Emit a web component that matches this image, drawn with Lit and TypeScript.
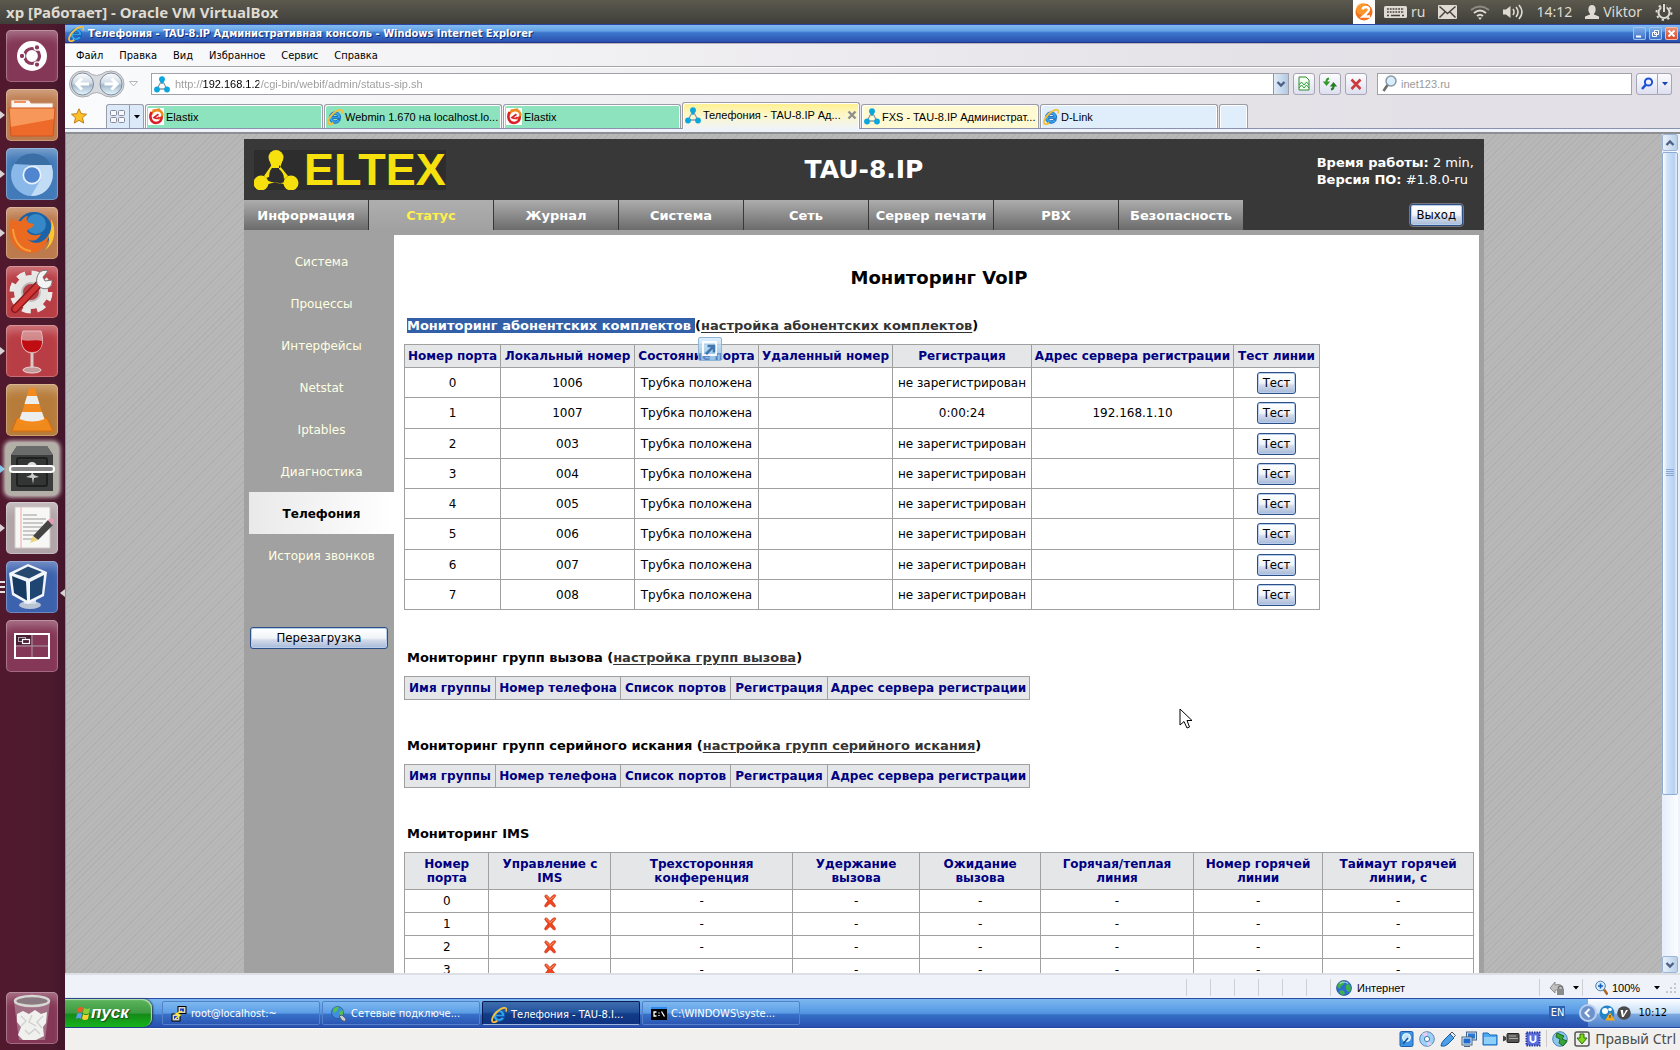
import { LitElement, html, svg, css, nothing, TemplateResult } from "lit";
import { customElement } from "lit/decorators.js";
import { classMap } from "lit/directives/class-map.js";
import { styleMap } from "lit/directives/style-map.js";

type Icon = TemplateResult;

const draw = (w: number, h: number, body: unknown, box = `0 0 ${w} ${h}`): Icon =>
  html`<svg width=${w} height=${h} viewBox=${box} aria-hidden="true">${body}</svg>`;

/* ---------- small shared icons ---------- */

const ieIcon = (size = 16) =>
  draw(size, size, svg`
    <path d="M13.6 9.4H5.6c.1 1.6 1.2 2.4 2.6 2.4 1 0 1.8-.4 2.2-1.2h3c-.8 2.4-2.800 3.700-5.300 3.700-3.400 0-5.800-2.300-5.800-5.600 0-3.400 2.400-5.800 5.800-5.800 3.600 0 5.800 2.600 5.500 6.500zM5.700 7.500h5c-.2-1.300-1.100-2.100-2.400-2.100-1.400 0-2.400.8-2.600 2.100z" fill="#36a5ee" stroke="#0d58ad" stroke-width=".8"/>
    <path d="M15 1.200C13.200 .2 9.500 1.700 6 4.700 2.500 7.800 .300 12 1.300 14.300c.8 1.600 3.200.8 5-.4" fill="none" stroke="#f4bf3c" stroke-width="1.900"/>
    <path d="M15 1.200c.6.700.5 2-.1 3.300" fill="none" stroke="#f4bf3c" stroke-width="1.600"/>`, "0 0 16 16");

const tauIcon = () =>
  draw(16, 17, svg`
    <path d="M8 4L3 13h10z" fill="none" stroke="#8d9aa0" stroke-width="1.300"/>
    <circle cx="8" cy="3.200" r="2.900" fill="#0aa6de"/><path d="M6 4l4 0-1.500 4h-1z" fill="#0aa6de"/>
    <circle cx="3" cy="13.500" r="2.900" fill="#0aa6de"/><circle cx="13" cy="13.500" r="2.900" fill="#0aa6de"/>`);

const elastixIcon = () =>
  draw(16, 17, svg`
    <rect width="16" height="17" fill="#fff"/>
    <path d="M4.500 2.600L12 1.500M3 6.500C5 1.500 12 1 14 5c1.200 3-1 6-3.500 5.500" fill="none" stroke="#f08a1c" stroke-width="2.400"/>
    <path d="M3.500 4C1 9 3 15 8 15c4 0 6-3 5.600-6.500" fill="none" stroke="#dc2028" stroke-width="2.600"/>
    <path d="M10.500 6.200L6 9.500c2 1.500 4.500 1 5.500-.5" fill="none" stroke="#dc2028" stroke-width="1.700"/>`);

const globe = () =>
  draw(16, 16, svg`
    <circle cx="8" cy="8" r="7.500" fill="#2a6fd0" stroke="#274f8c" stroke-width=".7"/>
    <path d="M3 3c2-2 5-2.500 6-1L7 5 5 6 4 9 1.500 7C1.500 5 2 4 3 3zM10 5l3-1c2 2 2 5 1.500 7L12 12l-2-3zM5 10l3 1 1 3-3 1-3-3z" fill="#3fb24c"/>
    <path d="M4 3.500c2-2 6-2 8 0" stroke="#d4ecff" stroke-width="1.200" fill="none" opacity=".8"/>`);

const chevron = (up: boolean) =>
  draw(10, 8, svg`<path d=${up ? "M1.500 6L5 2.500 8.500 6" : "M1.500 2L5 5.500 8.500 2"} fill="none" stroke="#4d6185" stroke-width="2.400"/>`);

const cross = () =>
  draw(14, 16, svg`
    <path d="M2 2.500C3.500 1 5 3 7 5.500 9 3 11 1 12.500 2c1 1-2 3.500-3.500 5.800 1.500 2 4 4.400 3.300 5.700-1.300 1.500-3.600-1.500-5.300-3.200-1.600 1.900-4 4.700-5.200 3.200-.8-1.300 1.800-3.600 3.200-5.700C3.600 5.500.9 3.600 2 2.500z" fill="#f0451c" stroke="#c6321a" stroke-width=".7"/>
    <path d="M3 3c1 .2 2.500 2 4 3.800L11.500 3" fill="none" stroke="#ff9a66" stroke-width="1"/>`);

/* ---------- launcher ---------- */

interface LaunchItem { label: string; tone: string; art: unknown; running?: boolean; active?: boolean; many?: boolean }

const launcher: LaunchItem[] = [
  { label: "Dash", tone: "plum", art: svg`
      <circle cx="26" cy="26" r="15" fill="#fff"/><circle cx="26" cy="26" r="7.500" fill="none" stroke="#8a3a5c" stroke-width="3.200"/>
      <g fill="#8a3a5c" stroke="#fff" stroke-width="1.300"><circle cx="16" cy="26" r="2.800"/><circle cx="31" cy="17.400" r="2.800"/><circle cx="31" cy="34.600" r="2.800"/></g>` },
  { label: "Files", tone: "orange", running: true, art: svg`
      <path d="M5 11h18l2 3h22v8H5z" fill="#fbf6f2" stroke="#c9906c"/><path d="M8 13h12" stroke="#f2915a" stroke-width="2"/>
      <path d="M3 19h46l-2 28H5z" fill="#ee6a2a"/><path d="M3 19h46l-1 11L4 38z" fill="#f9a367" opacity=".8"/><path d="M3 19h46l-2 28H5z" fill="none" stroke="#cf5520"/>` },
  { label: "Chromium", tone: "blue", running: true, art: svg`
      <circle cx="26" cy="27" r="21" fill="#8ab8e8"/><path d="M8 16A21 21 0 0 1 45 17H27z" fill="#3b6ea5"/>
      <path d="M45.500 17H27l8 14-10 17C43 48 50 31 45.500 17z" fill="#c2dcf6"/>
      <circle cx="26" cy="27" r="9.500" fill="#e8f3ff"/><circle cx="26" cy="27" r="7.800" fill="#4f86cf"/>` },
  { label: "Firefox", tone: "orange", running: true, art: svg`
      <circle cx="28" cy="23" r="18" fill="#1b63a8"/><circle cx="30" cy="17" r="10" fill="#4aa3da" opacity=".6"/>
      <path d="M45 12c6 10 4 25-6 31 5-6 5-10 3-14 3-4 4-10 3-17z" fill="#fbc52e"/>
      <path d="M5 11c3 3 6 3 10 3 3-4 5-5 7-5-2 3-2 5 1 7l5 1c0 4-6 4-7 7 3 5 9 5 14 3-3 7-9 8-14 5 8 7 17 4 22-5-1 12-10 20-20 19C9 45 0 33 5 11z" fill="#e96a20"/>
      <path d="M7 22c1 12 7 21 18 22" fill="none" stroke="#f6a03c" stroke-width="2"/>` },
  { label: "Settings", tone: "red", art: svg`
      <circle cx="25" cy="26" r="18" fill="none" stroke="#e9e9e7" stroke-width="7" stroke-dasharray="8.140 6"/>
      <circle cx="25" cy="26" r="13" fill="none" stroke="#e6e6e4" stroke-width="8"/><circle cx="25" cy="26" r="9" fill="none" stroke="#bbb" stroke-width="2"/>
      <path d="M9 43L34 17" stroke="#8d1a1a" stroke-width="8" stroke-linecap="round"/><path d="M9 43L34 17" stroke="#d03636" stroke-width="5" stroke-linecap="round"/>
      <path d="M31 18c-2-9 4-16 11-13l-5 6 2 4 7-1c1 8-7 11-12 7z" fill="#f4f4f4" stroke="#777"/>` },
  { label: "Wine", tone: "red", running: true, art: svg`
      <path d="M17 6h18c4 12 0 22-9 22S13 18 17 6z" fill="#e3b9b8" opacity=".6" stroke="#fff"/>
      <path d="M16 15c6 2 13-1 20 1 0 8-4 11-10 11s-10-4-10-12z" fill="#c00d12"/><path d="M26 28v15" stroke="#d9c7c7" stroke-width="3"/>
      <ellipse cx="26" cy="45" rx="9" ry="3" fill="#c49a9a" stroke="#ead7d7"/>` },
  { label: "VLC", tone: "amber", art: svg`
      <path d="M11 34h30l6 13H6z" fill="#f18a1c" stroke="#d96d08"/><path d="M23 5q3-3 6 0l10 34q-13 6-26 0z" fill="#f48b1e"/>
      <path d="M21 12h10l2.500 8h-15zM16 28h20l2.500 7q-12 5-25 0z" fill="#eceeee"/>` },
  { label: "VirtualBox VM", tone: "silver", running: true, active: true, art: svg`
      <path d="M11 3h30l6 9v36H5V12z" fill="#3c3e3e"/><path d="M11 3h30l6 9H5z" fill="#6a6c6b"/>
      <rect x="11" y="15" width="30" height="28" rx="2" fill="#333535" stroke="#1e1f1f" stroke-width="2"/>
      <circle cx="26" cy="24" r="5" fill="#ddd"/><path d="M20 34l5-2 1-3 2 3 5 2-5 1-1 6-1-6z" fill="#ccc"/>
      <rect x="4" y="23" width="44" height="6" rx="3" fill="#858585" stroke="#fff" stroke-width="2"/>` },
  { label: "Text Editor", tone: "gray", running: true, art: svg`
      <path d="M9 5h35v41H9z" fill="#f7f7f5" stroke="#cfcac8"/><path d="M15 5v41" stroke="#f0a8a8"/>
      <path d="M17 13h14M17 17h23M17 21h20M17 25h22M17 29h18M17 33h14M17 37h11" stroke="#999" stroke-width="1.200"/>
      <path d="M27 34L42 18l5 5-15 15z" fill="#444"/><path d="M27 34l5 4-8 3z" fill="#ead27a"/><path d="M42 18l3-2q4 1 3 4l-2 3z" fill="#e79ab8"/>` },
  { label: "VirtualBox", tone: "royal", running: true, many: true, art: svg`
      <ellipse cx="24" cy="44" rx="11" ry="4" fill="#b8c4d4"/><path d="M18 36h12v7H18z" fill="#d4dce8"/>
      <path d="M22 3l19 8-3 24-16 8L6 34 3 12z" fill="#f2f6fa"/>
      <path d="M22 5.500L36 11 23 17.500 8 12.500z" fill="#27486e"/><path d="M6 15l14 5.500 1 19L8 32z" fill="#173a62"/><path d="M38 14l-14 7v18l12-6z" fill="#1f4673"/>` },
  { label: "Workspaces", tone: "plum", art: svg`
      <rect x="9" y="14" width="34" height="24" fill="none" stroke="#fff" stroke-width="2"/><path d="M26 15v22M10 26h32" stroke="#a9a0a4"/>
      <rect x="10" y="15" width="15" height="10" fill="#4a1f33"/><rect x="12.500" y="17.500" width="7" height="4" fill="none" stroke="#aaa"/><rect x="16.500" y="19.500" width="7" height="4" fill="#4a1f33" stroke="#fff" stroke-width="1.200"/>` },
];

const trash = svg`
  <path d="M8 10h36l-5 38H13z" fill="#c8b5be" opacity=".45"/><ellipse cx="26" cy="9" rx="17" ry="5" fill="#8c7a82" stroke="#d6d6d3" stroke-width="2.500"/>
  <path d="M11 22l6-3 6 3 6-4 6 4 6-2-1 11-3 4 1 9-8 4H17l-5-5 3-8-4-5z" fill="#f0f0ee"/>
  <path d="M15 24l5 5-5 5M26 23l-3 7 7 4M37 24l-6 6 5 6M19 38l4 4 6-5 5 5" fill="none" stroke="#cfcfcd" stroke-width="1.300"/>`;

@customElement("unity-launcher")
class UnityLauncher extends LitElement {
  static styles = css`
    :host { display: flex; flex: none; width: 65px; flex-direction: column; justify-content: space-between;
      background: linear-gradient(90deg, #52192e, #4b1a2d 80%, #42152a); box-sizing: border-box; padding: 6px 0; }
    .list { display: flex; flex-direction: column; gap: 7px; }
    .slot { display: flex; align-items: center; position: relative; }
    .pip { width: 6px; height: 14px; flex: none; display: flex; align-items: center; }
    .item { width: 52px; height: 52px; padding: 0; border: 0; border-radius: 5px; display: block; overflow: hidden;
      box-shadow: inset 0 0 0 1px rgba(255,255,255,.25), inset 0 10px 10px -4px rgba(255,255,255,.3); }
    .item svg { display: block; }
    .plum { background-color: #843756; } .orange { background-color: #bd7a4c; } .blue { background-color: #4279b8; }
    .red { background-color: #b93d44; } .amber { background-color: #b77c3a; } .silver { background-color: #b3b0a8; }
    .gray { background-color: #b1a5a9; } .royal { background-color: #3c62ae; }
    .active { box-shadow: 0 0 4px 2px #d9d6d0; }
    .mark { position: absolute; right: 0; top: 22px; }
  `;
  render() {
    return html`
      <div class="list">
        ${launcher.map((i) => html`
          <div class="slot">
            <span class="pip">${i.many
              ? draw(5, 14, svg`<path d="M0 2h5M0 7h5M0 12h5" stroke="#e6dfe2" stroke-width="2"/>`)
              : i.running ? draw(5, 8, svg`<path d="M0 0l5 4-5 4z" fill=${i.active ? "#7cc4ee" : "#d8d2d4"}/>`) : nothing}</span>
            <button class=${classMap({ item: true, [i.tone]: true, active: !!i.active })} aria-label=${i.label}>${draw(52, 52, i.art)}</button>
            ${i.many ? html`<span class="mark">${draw(5, 8, svg`<path d="M5 0L0 4l5 4z" fill="#d8d2d4"/>`)}</span>` : nothing}
          </div>`)}
      </div>
      <div class="slot"><span class="pip"></span><button class="item plum" aria-label="Trash">${draw(52, 52, trash)}</button></div>`;
  }
}

/* ---------- host panel ---------- */

@customElement("host-panel")
class HostPanel extends LitElement {
  static styles = css`
    :host { display: flex; flex: none; height: 24px; align-items: center; justify-content: space-between; padding: 0 7px 0 6px;
      background: linear-gradient(#5c5a4e, #3f3e3a); color: #dfdbd2; font: 14px/24px "Noto Sans", sans-serif; }
    .title { font-weight: 700; font-size: 15px; }
    .tray { display: flex; align-items: center; gap: 13px; }
    .tray svg { display: block; }
    .pair { display: flex; align-items: center; gap: 4px; }
    .gis { background: #fff; height: 24px; width: 22px; display: flex; align-items: center; justify-content: center; margin-right: -4px; }
  `;
  render() {
    return html`
      <span class="title">xp [Работает] - Oracle VM VirtualBox</span>
      <div class="tray">
        <span class="gis">${draw(18, 18, svg`<circle cx="9" cy="9" r="8.500" fill="#f4701a"/><circle cx="7" cy="6" r="6" fill="#fcb03a" opacity=".6"/>
          <path d="M7.500 6.500Q8 4 11 4q3 0 3 2.700Q14 8.500 8 13.500h7" stroke="#fff" stroke-width="2.400" fill="none"/>`)}</span>
        <span class="pair">${draw(23, 14, svg`<rect x="0" y="1" width="23" height="12" rx="1.500" fill="#dfdbd2"/>
          <path d="M3 4h17M3 7h17" stroke="#45443f" stroke-width="1.600" stroke-dasharray="1.800 1"/><path d="M3 10.500h2M7 10.500h9M18 10.500h2" stroke="#45443f" stroke-width="1.500"/>`)}ru</span>
        ${draw(19, 14, svg`<rect x="0" y="0" width="19" height="14" rx="1" fill="#dfdbd2"/><path d="M1.500 1.500L9.500 8.500l8-7M1.500 12.500L7 7M17.500 12.500L12 7" fill="none" stroke="#45443f" stroke-width="1.500"/>`)}
        ${draw(20, 15, svg`<path d="M1 5Q10-2 19 5" stroke="#8f8c84" fill="none" stroke-width="1.800"/><path d="M4 8q6-5 12 0M7 11q3-2.500 6 0" fill="none" stroke="#dfdbd2" stroke-width="2"/><path d="M8 12.500h4L10 15z" fill="#dfdbd2"/>`)}
        ${draw(20, 16, svg`<path d="M0 5.500h3L7.500 2v12L3 10.500H0z" fill="#dfdbd2"/><path d="M10 5q2 3 0 6M13 3q4 5 0 10M16 1q6 7 0 14" fill="none" stroke="#dfdbd2" stroke-width="1.600"/>`)}
        <time>14:12</time>
        <span class="pair">${draw(14, 14, svg`<ellipse cx="7" cy="4.500" rx="3.600" ry="4.500" fill="#dfdbd2"/><path d="M5 7h4v2.500l5 2V14H0v-2.500l5-2z" fill="#dfdbd2"/>`)}Viktor</span>
        ${draw(18, 18, svg`<circle cx="9" cy="9.500" r="5.500" fill="none" stroke="#dfdbd2" stroke-width="2"/><circle cx="9" cy="9.500" r="7.500" fill="none" stroke="#dfdbd2" stroke-width="2" stroke-dasharray="2.300 3.590"/>
          <path d="M9 0v9" stroke="#4a4943" stroke-width="5"/><path d="M9 1v8" stroke="#dfdbd2" stroke-width="2"/>`)}
      </div>`;
  }
}

/* ---------- browser chrome ---------- */

const menus = ["Файл", "Правка", "Вид", "Избранное", "Сервис", "Справка"];
const tabs = [
  { text: "Elastix", tone: "green", icon: elastixIcon },
  { text: "Webmin 1.670 на localhost.lo...", tone: "green", icon: () => ieIcon(16) },
  { text: "Elastix", tone: "green", icon: elastixIcon },
  { text: "Телефония - TAU-8.IP Ад...", tone: "current", icon: tauIcon },
  { text: "FXS - TAU-8.IP Администрат...", tone: "yellow", icon: tauIcon },
  { text: "D-Link", tone: "pale", icon: () => ieIcon(16) },
];

@customElement("ie-chrome")
class IeChrome extends LitElement {
  static styles = css`
    :host { display: block; flex: none; font: 11px/14px "DejaVu Sans Condensed", "DejaVu Sans", sans-serif; color: #000;
      background: linear-gradient(90deg, #fafbfc, #f0eff2 35%, #e4e1e7 75%, #e2e0e6); }
    svg { display: block; flex: none; }
    button { font: inherit; color: inherit; padding: 0; margin: 0; border: 0; background: none; display: flex; align-items: center; justify-content: center; }
    .title { height: 19px; display: flex; align-items: center; gap: 4px; padding: 0 2px 0 3px; box-sizing: border-box;
      border-top: 1px solid #2b46a4; border-bottom: 1px solid #22378c;
      background: linear-gradient(#81bbef, #64a2e6 35%, #3b78cc 45%, #2a50ae); }
    .caption { flex: 1; color: #fff; font-weight: 700; text-shadow: 1px 1px 0 #122a6e; white-space: nowrap; }
    .win { display: flex; gap: 3px; }
    .win button { width: 13px; height: 13px; border-radius: 2px; background: linear-gradient(#7fb0ea, #3a6dc6); box-shadow: inset 0 0 0 1px #9fc4f2; }
    .win .close { background: linear-gradient(#f0937a, #d7421f); box-shadow: inset 0 0 0 1px #f3b8a6; }
    .menu { display: flex; height: 24px; box-sizing: border-box; align-items: center; border-top: 1px solid #b9b7bd; border-bottom: 1px solid #a5a5ab; padding: 2px 0 0 11px; gap: 16px; }
    .nav { display: flex; height: 35px; align-items: center; padding: 0 8px 2px 4px; gap: 4px; box-sizing: border-box; border-top: 1px solid #fff; }
    .history { display: flex; align-items: center; gap: 4px; margin-right: 9px; }
    .address { flex: 1; display: flex; align-items: center; height: 22px; box-sizing: border-box; border: 1px solid #a1a1a8; background: #fff; padding-left: 2px; gap: 5px; }
    input { flex: 1; min-width: 0; border: 0; outline: 0; padding: 0; margin: 0; height: 18px; font: 11px/18px "Liberation Sans", sans-serif; color: #9a9a9a; background: transparent; }
    .url { -webkit-text-fill-color: transparent; -webkit-background-clip: text; background-clip: text;
      background-image: linear-gradient(90deg, #9a9a9a 27px, #000 27px 84px, #9a9a9a 84px); }
    .drop { width: 15px; height: 20px; background: linear-gradient(90deg, #dfebf7, #b2c9e4); border-left: 1px solid #7d9cc2; }
    .tool { width: 22px; height: 22px; border: 1px solid #a5a5b4; border-radius: 3px; background: linear-gradient(#fdfdff, #dddff0); box-sizing: border-box; }
    .search { display: flex; align-items: center; width: 255px; height: 22px; box-sizing: border-box; border: 1px solid #a1a1a8; background: #fff; padding-left: 4px; gap: 4px; margin-left: 6px; }
    .pairbtn { display: flex; }
    .pairbtn .tool:first-child { border-radius: 3px 0 0 3px; }
    .pairbtn .tool:last-child { width: 14px; border-left: 0; border-radius: 0 3px 3px 0; }
    .tabs { display: flex; align-items: flex-end; height: 27px; border-bottom: 1px solid #8a93ab; padding-left: 6px; box-sizing: border-box; }
    .fav { width: 16px; height: 24px; margin-right: 19px; }
    .quick { display: flex; height: 24px; box-sizing: border-box; border: 1px solid #9b9ca6; border-bottom: 0; background: #dce9f8; border-radius: 3px 3px 0 0; margin-right: 1px; }
    .quick button { width: 22px; } .quick button:last-child { width: 14px; border-left: 1px solid #9b9ca6; }
    .tab { width: 178px; height: 24px; box-sizing: border-box; display: flex; align-items: center; justify-content: flex-start; gap: 2px; padding: 0 2px;
      border: 1px solid #9b9ca6; border-bottom: 0; border-radius: 3px 3px 0 0; margin-right: 1px; box-shadow: inset 1px 1px 0 #fff, inset -1px 0 0 #fff; white-space: nowrap; }
    .tab span { flex: 1; text-align: left; font: 11px/14px "Liberation Sans", sans-serif; }
    .green { background: #8de3be; } .yellow { background: #fffad2; } .pale { background: #e0edfa; }
    .current { height: 27px; background: linear-gradient(#fff08c, #fdf7c8 45%, #eff3f9); margin-bottom: -1px; padding-bottom: 2px; }
    .blank { width: 29px; }
    .edge { height: 3px; background: #eef3fb; border-bottom: 2px solid #8d8f92; }
  `;
  render() {
    return html`
      <div class="title">${ieIcon(16)}<span class="caption">Телефония - TAU-8.IP Административная консоль - Windows Internet Explorer</span>
        <div class="win">
          <button aria-label="Свернуть">${draw(13, 13, svg`<path d="M3 9.500h5" stroke="#fff" stroke-width="2"/>`)}</button>
          <button aria-label="Восстановить">${draw(13, 13, svg`<path d="M5.500 3.500h4v4h-4zM3.500 5.500h4v4h-4z" fill="#4b7ed0" stroke="#fff"/>`)}</button>
          <button class="close" aria-label="Закрыть">${draw(13, 13, svg`<path d="M3.500 3.500l6 6M9.500 3.500l-6 6" stroke="#fff" stroke-width="2"/>`)}</button>
        </div>
      </div>
      <div class="menu">${menus.map((m) => html`<button>${m}</button>`)}</div>
      <div class="nav">
        <div class="history">
          ${draw(56, 28, svg`
            <defs><linearGradient id="orb" x1="0" y1="0" x2="0" y2="1"><stop offset="0" stop-color="#fdfeff"/><stop offset=".45" stop-color="#cfdbe6"/><stop offset=".55" stop-color="#a5b9cc"/><stop offset="1" stop-color="#e6f7ff"/></linearGradient></defs>
            <path d="M13.500 1Q20 1 23 4.500q4.500 2 9 0Q36 1 42 1a12.800 12.800 0 0 1 0 26Q36 27 32 23.500q-4.500-2-9 0Q20 27 13.500 27a12.800 12.800 0 0 1 0-26z" fill="#d7dade" stroke="#a9adb3"/>
            <circle cx="13.500" cy="14" r="11" fill="url(#orb)" stroke="#808b99"/><circle cx="42" cy="14" r="11" fill="url(#orb)" stroke="#808b99"/>
            <g fill="none" stroke-width="3" stroke="#fff"><path d="M20 14H8M13 8.500L7.500 14l5.500 5.500M35.500 14h12M42.500 8.500L48 14l-5.500 5.500"/></g>`)}
          ${draw(9, 6, svg`<path d="M.5.500h8L4.500 5z" fill="#fff" stroke="#b6b6bb"/>`)}
        </div>
        <div class="address">${tauIcon()}<input class="url" aria-label="Адрес" .value=${"http://192.168.1.2/cgi-bin/webif/admin/status-sip.sh"} /><button class="drop" aria-label="Список адресов">${chevron(false)}</button></div>
        <button class="tool" aria-label="Просмотр совместимости">${draw(14, 16, svg`<path d="M2 1h7l3 3v10H2z" fill="#f4fff2" stroke="#2f8b2f"/><path d="M2 9l2.500-3L7 9l2.500-3L12 9M2 12l2.500-3L7 12l2.500-3 2.500 3" fill="none" stroke="#2f9b3a"/>`)}</button>
        <button class="tool" aria-label="Обновить">${draw(16, 16, svg`<path d="M7 2.500Q4 3 4.500 7" fill="none" stroke="#2e9a2a" stroke-width="2"/><path d="M.8 5.500h7.400L4.500 10z" fill="#2e9a2a"/><path d="M9 13.500q3-.5 2.500-4.500" fill="none" stroke="#257d22" stroke-width="2"/><path d="M7.800 10.500h7.400L11.500 6z" fill="#257d22"/>`)}</button>
        <button class="tool" aria-label="Остановить">${draw(14, 14, svg`<path d="M2.500 2.500l9 9.500M11.500 2.500l-9 9.500" stroke="#cc3c3c" stroke-width="2.600"/>`)}</button>
        <div class="search">${draw(15, 18, svg`<circle cx="9" cy="6" r="5" fill="#d8eefc" stroke="#8b98a6" stroke-width="1.500"/><path d="M5.500 10L1.500 16" stroke="#6f6f6f" stroke-width="2.600"/>`)}<input aria-label="Поиск" .value=${"inet123.ru"} /></div>
        <div class="pairbtn"><button class="tool" aria-label="Найти">${draw(14, 14, svg`<circle cx="8.500" cy="5" r="3.600" fill="none" stroke="#1f50d8" stroke-width="2"/><path d="M6 7.500L2 12" stroke="#1f50d8" stroke-width="2.600"/>`)}</button><button class="tool" aria-label="Параметры поиска">${draw(6, 4, svg`<path d="M0 0h6L3 3.500z" fill="#1646b8"/>`)}</button></div>
      </div>
      <div class="tabs">
        <button class="fav" aria-label="Избранное">${draw(16, 16, svg`<path d="M8 .8l2.200 4.900 5.300.5-4 3.600 1.200 5.300L8 12.300l-4.700 2.800 1.200-5.300-4-3.600 5.300-.5z" fill="#fbc02a" stroke="#c17e12"/>`)}</button>
        <div class="quick">
          <button aria-label="Быстрые вкладки">${draw(16, 14, svg`<g fill="#f6f8fb" stroke="#888b98"><rect x=".5" y=".5" width="6" height="5" rx="1"/><rect x="8.500" y=".5" width="6" height="5" rx="1"/><rect x=".5" y="7.500" width="6" height="5" rx="1"/><rect x="8.500" y="7.500" width="6" height="5" rx="1"/></g>`)}</button>
          <button aria-label="Список вкладок">${draw(6, 4, svg`<path d="M0 0h6L3 3.500z"/>`)}</button>
        </div>
        ${tabs.map((t) => html`<button class=${classMap({ tab: true, [t.tone]: true })}>${t.icon()}<span>${t.text}</span>${
          t.tone === "current" ? draw(10, 10, svg`<path d="M1.500 1.500l7 7M8.500 1.500l-7 7" stroke="#8f8f8f" stroke-width="2.400"/>`) : nothing}</button>`)}
        <button class="tab pale blank" aria-label="Создать вкладку"></button>
      </div>
      <div class="edge"></div>`;
  }
}

/* ---------- TAU-8.IP page ---------- */

interface Column { text: string; width?: number; share?: string }

const navItems = ["Информация", "Статус", "Журнал", "Система", "Сеть", "Сервер печати", "PBX", "Безопасность"];
const sideItems = ["Система", "Процессы", "Интерфейсы", "Netstat", "Iptables", "Диагностика", "Телефония", "История звонков"];
const portCols: Column[] = [
  { text: "Номер порта", width: 96 }, { text: "Локальный номер", width: 134 }, { text: "Состояние порта", width: 124 },
  { text: "Удаленный номер", width: 134 }, { text: "Регистрация", width: 139 }, { text: "Адрес сервера регистрации", width: 202 }, { text: "Тест линии", width: 86 },
];
const ports = ["1006", "1007", "003", "004", "005", "006", "007", "008"].map((local, i) => ({
  port: String(i), local, reg: i === 1 ? "0:00:24" : "не зарегистрирован", server: i === 1 ? "192.168.1.10" : "",
}));
const groupCols: Column[] = [
  { text: "Имя группы", width: 91 }, { text: "Номер телефона", width: 125 }, { text: "Список портов", width: 110 },
  { text: "Регистрация", width: 97 }, { text: "Адрес сервера регистрации", width: 202 },
];
const imsCols: Column[] = [
  { text: "Номер порта", share: "7.9%" }, { text: "Управление с IMS", share: "11.4%" }, { text: "Трехсторонняя конференция", share: "17%" },
  { text: "Удержание вызова", share: "11.9%" }, { text: "Ожидание вызова", share: "11.3%" }, { text: "Горячая/теплая линия", share: "14.3%" },
  { text: "Номер горячей линии", share: "12.1%" }, { text: "Таймаут горячей линии, с", share: "14.1%" },
];

const colgroup = (cols: Column[]) =>
  html`<colgroup>${cols.map((c) => html`<col style=${styleMap({ width: c.share ?? `${c.width}px` })} />`)}</colgroup>`;
const head = (cols: Column[]) => html`<thead><tr>${cols.map((c) => html`<th scope="col">${c.text}</th>`)}</tr></thead>`;
const total = (cols: Column[]) => styleMap({ width: `${cols.reduce((sum, c) => sum + (c.width ?? 0), 1)}px` });

@customElement("tau-page")
class TauPage extends LitElement {
  static styles = css`
    :host { display: block; flex: 1; min-width: 0; overflow: hidden; box-sizing: border-box; padding: 5px 0 0; border-left: 1px solid #8d8f92;
      background: repeating-linear-gradient(135deg, #b8b8b8 0 3px, #b0b0b0 3px 4px); font: 12px/16px "DejaVu Sans", sans-serif; color: #000; }
    .page { max-width: 1240px; margin: 0 auto; background: #a1a1a1; min-height: 100%; }
    .top { background: #383838; }
    .banner { height: 61px; box-sizing: border-box; display: grid; grid-template-columns: 1fr auto 1fr; align-items: center; padding: 0 10px; color: #fff; }
    .logo { display: flex; align-items: center; gap: 4px; background: #2d2d2d; width: 192px; height: 40px; color: #f6e00e; font: 700 45px/40px "Liberation Sans", sans-serif; }
    .logo svg { flex: none; }
    .device { font-size: 25px; line-height: 30px; font-weight: 700; margin: 0; }
    .facts { justify-self: end; font-size: 13px; line-height: 17px; margin: 0; padding-top: 2px; }
    .bar { display: flex; align-items: center; }
    .bar a { flex: 0 1 125px; box-sizing: border-box; height: 30px; line-height: 31px; border-right: 1px solid #383838; text-align: center; color: #fff; font-size: 13px; font-weight: 700; text-decoration: none;
      background: linear-gradient(#adadad, #6b6b6b); white-space: nowrap; }
    .bar a.on { background: linear-gradient(#aeaeae, #a1a1a1); color: #fff04a; }
    .xp { font: 13px/16px "DejaVu Sans Condensed", "DejaVu Sans", sans-serif; color: #000; height: 22px; box-sizing: border-box; padding: 0 5px; border: 1px solid #2c4f86; border-radius: 3px;
      background: linear-gradient(#fff, #f1f5f8 50%, #d3dbea 60%, #a6b9d8); box-shadow: inset 0 0 0 1px #b9cdec; }
    .xp.exit { margin-left: auto; margin-right: 21px; padding: 0 6px; outline: 1px solid #77767a; }
    .body { display: flex; padding: 5px 5px 0 0; }
    .side { flex: none; width: 150px; box-sizing: border-box; padding: 5px 0 0 5px; font-size: 12px; }
    .side a { display: block; height: 42px; line-height: 44px; text-align: center; color: #ffffe1; text-decoration: none; }
    .side a.on { background: linear-gradient(90deg, #e9e9e9, #fff); color: #000; font-weight: 700; }
    .reboot { width: 138px; margin: 51px 0 0 1px; display: block; }
    .main { flex: 1; min-width: 0; background: #fff; padding: 30px 5px 0 10px; }
    h2 { font-size: 18px; line-height: 26px; margin: 0; text-align: center; }
    h3 { font-size: 13px; line-height: 16px; margin: 0 0 10px 3px; font-weight: 700; }
    h2 + h3 { margin-top: 27px; }
    .picked { background: #3160a8; color: #fff; padding-right: 4px; }
    h3 a { color: #333; text-underline-offset: 2px; }
    table { border-collapse: collapse; table-layout: fixed; font-size: 12px; text-align: center; margin-bottom: 38px; }
    th { background: #e5e6e8; color: #000080; font-size: 12px; line-height: 14px; height: 22px; }
    th, td { border: 1px solid #a0a0a0; padding: 0; white-space: nowrap; }
    .ports { margin-bottom: 40px; }
    .ports td { height: 29px; } .ports tr:nth-child(4n + 2) td { height: 30px; }
    .ims { width: 100%; margin-bottom: 0; } .ims th { height: 37px; white-space: normal; padding: 0 8px; box-sizing: border-box; } .ims td { height: 22px; }
    .ims svg { display: block; margin: 0 auto; }
    .test { vertical-align: middle; }
    .anchor { position: relative; }
    .accel { position: absolute; left: 100%; top: 19px; margin-left: 3px; width: 24px; height: 24px; border: 1px solid #8fb4d6; border-radius: 2px; padding: 0; box-sizing: border-box; background: linear-gradient(rgba(214,236,252,.85), rgba(110,176,226,.7)); }
    .accel svg { display: block; }
  `;
  private group(title: string, link: string) {
    return html`<h3>${title} (<a href="#">${link}</a>)</h3>
      <table style=${total(groupCols)}>${colgroup(groupCols)}${head(groupCols)}</table>`;
  }
  render() {
    return html`<div class="page">
      <header class="top">
        <div class="banner">
          <div class="logo">${draw(46, 40, svg`
            <g fill="#f6e00e"><circle cx="22" cy="7.500" r="7.500"/><circle cx="7" cy="33" r="7.500"/><circle cx="37" cy="33" r="7.500"/>
            <path d="M15 9h14l-3 9h-8zM12 28l-2-2 9-13 2 2q-6 4-6 12zM34 26l-9-11 0 4q5 4 5 10zM12 35q10-5 20 0l0-3q-10 3-20-2z"/></g>`)}<span>ELTEX</span></div>
          <h1 class="device">TAU-8.IP</h1>
          <p class="facts"><b>Время работы:</b> 2 min,<br /><b>Версия ПО:</b> #1.8.0-ru</p>
        </div>
        <nav class="bar">${navItems.map((n) => html`<a href="#" class=${classMap({ on: n === "Статус" })}>${n}</a>`)}<button class="xp exit">Выход</button></nav>
      </header>
      <div class="body">
        <nav class="side">${sideItems.map((n) => html`<a href="#" class=${classMap({ on: n === "Телефония" })}>${n}</a>`)}
          <button class="xp reboot">Перезагрузка</button></nav>
        <main class="main">
          <h2>Мониторинг VoIP</h2>
          <h3><span class="anchor"><span class="picked">Мониторинг абонентских комплектов</span><button class="accel" aria-label="Ускорители">${draw(22, 22, svg`
            <path d="M4 4h13v13H4z" fill="none" stroke="#fff" stroke-width="2" opacity=".9"/><path d="M7 16l7-7M8.500 8H15v6.500" fill="none" stroke="#3f78b0" stroke-width="2.600"/>`)}</button></span>(<a href="#">настройка абонентских комплектов</a>)</h3>
          <table class="ports" style=${total(portCols)}>${colgroup(portCols)}${head(portCols)}
            <tbody>${ports.map((p) => html`<tr><td>${p.port}</td><td>${p.local}</td><td>Трубка положена</td><td></td><td>${p.reg}</td><td>${p.server}</td><td><button class="xp test">Тест</button></td></tr>`)}</tbody>
          </table>
          ${this.group("Мониторинг групп вызова", "настройка групп вызова")}
          ${this.group("Мониторинг групп серийного искания", "настройка групп серийного искания")}
          <h3>Мониторинг IMS</h3>
          <table class="ims">${colgroup(imsCols)}${head(imsCols)}
            <tbody>${[0, 1, 2, 3].map((n) => html`<tr><td>${n}</td><td>${cross()}</td>${imsCols.slice(2).map(() => html`<td>-</td>`)}</tr>`)}</tbody>
          </table>
        </main>
      </div>
    </div>`;
  }
}

/* ---------- status bar, taskbar, VM indicator bar ---------- */

const tasks = [
  { text: "root@localhost:~", icon: draw(16, 16, svg`<g fill="#d5d5cc" stroke="#000"><rect x="7" y=".5" width="8" height="7"/><rect x="1" y="8" width="8" height="7"/></g><path d="M9 2.500h4v3H9zM3 10h4v3H3z" fill="#1b3cc0"/><path d="M11 5l-6 3 4 1-5 4" fill="none" stroke="#ffe83a" stroke-width="1.500"/>`) },
  { text: "Сетевые подключе...", icon: draw(16, 16, svg`<circle cx="6.500" cy="6.500" r="6" fill="#3f8fe0" stroke="#274f8c" stroke-width=".7"/><path d="M2 3q3-3 6-2L6 5 3 7zM8 6l4-2q1 4-2 7z" fill="#52c050"/><path d="M8 10l3-1 4 4-1 2.500-3-1z" fill="#c6ced8" stroke="#55606c"/>`) },
  { text: "Телефония - TAU-8.I...", icon: ieIcon(16), on: true },
  { text: "C:\\WINDOWS\\syste...", icon: draw(16, 13, svg`<rect width="16" height="13" fill="#000"/><path d="M0 1h16" stroke="#2f8af0" stroke-width="2"/><path d="M5.500 5H3v4h2.500M8 5.500v1M8 8v1M10.500 4.500l3 5" stroke="#fff" fill="none" stroke-width="1.300"/>`) },
];

const indicators: Icon[] = [
  draw(15, 16, svg`<rect x="1" y=".5" width="13" height="15" rx="1.500" fill="#3f93e4" stroke="#1d5ea8"/><circle cx="7.500" cy="6.500" r="4" fill="#bfe3fb" stroke="#fff"/><path d="M4 13l5-6" stroke="#1a4f90" stroke-width="1.500"/>`),
  draw(16, 16, svg`<circle cx="8" cy="8" r="7.300" fill="#9fd0f8" stroke="#5d87b4"/><path d="M8 8L3 2.500 8 1zM8 8l5 5.500L8 15z" fill="#e6ccf2"/><circle cx="8" cy="8" r="2.600" fill="#fff" stroke="#3c78b8"/>`),
  draw(16, 16, svg`<path d="M1 15q0-3 3-6l6-6 4 4-6 6q-3 3-7 2z" fill="#4ba0ea" stroke="#1b5da4"/><path d="M10 3l2-2 3.500 3.500-2 2z" fill="#e3eef8" stroke="#456"/>`),
  draw(16, 16, svg`<rect x="5.500" y="1" width="10" height="8" fill="#cfdbe6" stroke="#456487"/><rect x="7" y="2.500" width="7" height="5" fill="#2878d8"/><rect x="1" y="6" width="10" height="8" fill="#e5edf4" stroke="#456487"/><path d="M2.500 7.500h7v5h-7z" fill="#1d6ad0"/><path d="M3 15.500h6" stroke="#456487"/>`),
  draw(16, 15, svg`<path d="M1 2h5l2 2h7v10H1z" fill="#4aa9f2" stroke="#1e66b4"/><path d="M2 6h12v7H2z" fill="#8fd0fb"/>`),
  draw(17, 13, svg`<rect x="4" y="1.500" width="12" height="9" rx="1" fill="#555" stroke="#222"/><path d="M0 3.500l3 1.500v3L0 9.500z" fill="#444"/><path d="M6 4h7M6 6.500h9" stroke="#aaa"/>`),
  draw(16, 16, svg`<rect x="1.500" y="1.500" width="13" height="13" fill="#5b70e0" stroke="#2c3aa4" stroke-width="2" stroke-dasharray="1.500 1"/><path d="M5.500 4.500v5q2.500 3.500 5 0v-5" fill="none" stroke="#fff" stroke-width="1.800"/>`),
];

@customElement("vm-footer")
class VmFooter extends LitElement {
  static styles = css`
    :host { display: block; flex: none; font: 11px/14px "DejaVu Sans Condensed", "DejaVu Sans", sans-serif; }
    svg { display: block; flex: none; }
    button { font: inherit; padding: 0; margin: 0; border: 0; background: none; color: inherit; display: flex; align-items: center; }
    .status { height: 25px; box-sizing: border-box; border-top: 2px solid #dcdfe4; background: #eff2f8; display: flex; align-items: center; justify-content: flex-end; padding: 2px 2px 0 0; font: 11px/14px "Liberation Sans", sans-serif; }
    .panes { display: flex; }
    .panes i { width: 23px; height: 17px; border-left: 1px solid #cfcfd3; }
    .zone, .opt, .zoom { display: flex; align-items: center; box-sizing: border-box; border-left: 1px solid #cfcfd3; height: 17px; }
    .zone { gap: 5px; width: 209px; padding-left: 5px; }
    .opt { gap: 7px; width: 43px; padding-left: 9px; }
    .zoom { gap: 4px; width: 82px; padding-left: 12px; }
    .zoom span { margin-right: 10px; }
    .task { height: 30px; box-sizing: border-box; display: flex; align-items: center; gap: 2px; border-top: 1px solid #2a4daa; border-bottom: 1px solid #2447a4; color: #fff;
      background: linear-gradient(#7cb8ee, #5c9ee6 40%, #508fdf 54%, #3570c6 56%, #2a50b0); }
    .start { width: 87px; height: 28px; margin-right: 8px; padding-left: 11px; border-radius: 0 9px 9px 0; background: linear-gradient(#5eb55e, #3c9a40 50%, #148a18 55%, #16b41c); box-shadow: inset -1px 1px 1px #b9dfb2, 1px 0 2px #234;
      font: italic 700 17px/24px "Liberation Sans", sans-serif; text-shadow: 1px 1px 1px #1a4a1a; }
    .app { width: 158px; height: 24px; box-sizing: border-box; border: 1px solid #5580c8; border-radius: 2px; padding: 1px 8px 0; gap: 4px; background: linear-gradient(#7db9f0, #5c9de6 50%, #3771c8 56%, #2b56b4); white-space: nowrap; }
    .app.on { background: linear-gradient(#3e6cae, #24559e 45%, #123c88 55%, #0e3280); border-color: #0a1b50 #0a1b50 #9db3d8; padding-top: 3px; }
    .lang { margin-left: auto; margin-right: 21px; background: #2f5fb0; width: 16px; text-align: center; }
    .tray { display: flex; align-items: center; gap: 2px; height: 28px; padding-right: 13px; background: linear-gradient(#fdfeff, #c5def8 50%, #7ea9e0 55%, #4d7fc8); color: #000; }
    .tray svg:first-child { margin-left: -9px; }
    .tray time { margin-left: 5px; }
    .host { height: 22px; background: #f1f0ee; border-top: 1px solid #fff; box-sizing: border-box; display: flex; align-items: center; justify-content: flex-end; gap: 5px; padding: 0 4px 2px 0; color: #4c4c4c; font: 14px/19px "Noto Sans", sans-serif; }
    .rule { width: 1px; height: 17px; background: #ccc; }
  `;
  render() {
    return html`
      <div class="status">
        <div class="panes"><i></i><i></i><i></i><i></i><i></i><i></i></div>
        <div class="zone">${globe()}Интернет</div>
        <button class="opt" aria-label="Защищенный режим">${draw(17, 16, svg`<path d="M1 8l5-6v3q7-2 8 4l-1 3q-2-3-7-2v3z" fill="#c0c0c0" stroke="#8e8e8e"/><rect x="8" y="9" width="7" height="6" fill="#8a8a8a"/><path d="M9.500 9V7q2-2 4 0v2" fill="none" stroke="#777" stroke-width="1.500"/>`)}${draw(6, 4, svg`<path d="M0 0h6L3 3.500z"/>`)}</button>
        <button class="zoom">${draw(13, 16, svg`<circle cx="5.500" cy="6" r="4.800" fill="#d6ebfc" stroke="#4e7cab"/><path d="M3 6h5M5.500 3.500v5" stroke="#1160c0" stroke-width="1.600"/><path d="M9 9.500l3.500 5" stroke="#a8682c" stroke-width="2.600"/>`)}<span>100%</span>${draw(6, 4, svg`<path d="M0 0h6L3 3.500z"/>`)}</button>
        ${draw(14, 14, svg`<g fill="#c4c7ce"><rect x="10" y="2" width="2" height="2"/><rect x="6" y="6" width="2" height="2"/><rect x="10" y="6" width="2" height="2"/><rect x="2" y="10" width="2" height="2"/><rect x="6" y="10" width="2" height="2"/><rect x="10" y="10" width="2" height="2"/></g>`)}
      </div>
      <div class="task">
        <button class="start">${draw(15, 17, svg`<path d="M2 3q3-2 5 0L6 8Q4 6 1 8z" fill="#ee5a24"/><path d="M8 3q3 2 6 0l-1 5q-3 2-6 0z" fill="#8fd03a"/><path d="M1 9q3-2 5 0l-1 5q-2-2-5 0z" fill="#5aa0f0"/><path d="M7 9q3 2 6 0l-1 5q-3 2-6 0z" fill="#fbcf32"/>`)}<span>пуск</span></button>
        ${tasks.map((t) => html`<button class=${classMap({ app: true, on: !!t.on })}>${t.icon}<span>${t.text}</span></button>`)}
        <span class="lang">EN</span>
        <div class="tray">
          ${draw(18, 18, svg`<circle cx="9" cy="9" r="8" fill="#6d92cc" stroke="#b8cfee" stroke-width="2"/><path d="M10.500 5L6.500 9l4 4" fill="none" stroke="#fff" stroke-width="2"/>`)}
          ${draw(16, 16, svg`<circle cx="8" cy="8" r="7.500" fill="#2484c8"/><circle cx="6" cy="6" r="3" fill="#fff"/><circle cx="11" cy="4.500" r="1.800" fill="#fff"/><path d="M11 7.500l5 8H6z" fill="#f9a81a"/><path d="M11 10v3" stroke="#333"/>`)}
          ${draw(14, 14, svg`<circle cx="7" cy="7" r="6.800" fill="#4a4a4c"/><path d="M3.500 4H6l.5 5L9 4h2L6.500 11H5z" fill="#fff"/>`)}
          <time>10:12</time>
        </div>
      </div>
      <div class="host">${indicators}<span class="rule"></span>
        ${draw(17, 16, svg`<circle cx="8" cy="8" r="7.300" fill="#8cc6ee" stroke="#4a86bb"/><path d="M5 2l7 3-2 3 5 2-4 5-4-3 1-4-4-2z" fill="#3ba437" stroke="#1d6b1c"/>`)}
        ${draw(16, 16, svg`<rect x="1" y="1" width="14" height="14" rx="2" fill="#eee" stroke="#555" stroke-width="1.500"/><path d="M6 3h4v4h3l-5 6-5-6h3z" fill="#7fd718" stroke="#2b6e0c"/>`)}
        <span>Правый Ctrl</span></div>`;
  }
}

/* ---------- desktop ---------- */

@customElement("app-root")
class AppRoot extends LitElement {
  static styles = css`
    :host { display: flex; flex-direction: column; height: 100vh; overflow: hidden; position: relative; }
    .desk { flex: 1; min-height: 0; display: flex; }
    .vm { flex: 1; min-width: 0; display: flex; flex-direction: column; }
    .view { flex: 1; min-height: 0; display: flex; background: #eef3fb; padding-right: 2px; }
    .scroll { width: 16px; flex: none; display: flex; flex-direction: column; background: linear-gradient(90deg, #e6eefb, #fbfdff); }
    .scroll button { height: 17px; padding: 0; border: 1px solid #9db6d6; border-radius: 2px; background: linear-gradient(90deg, #e8f1fb, #b9cfea); display: flex; align-items: center; justify-content: center; }
    .thumb { flex: 0 1 643px; box-sizing: border-box; border: 1px solid #8fabcf; border-radius: 2px; background: linear-gradient(90deg, #fff, #cfe2f9 30%, #b7d1f2 80%, #e9f2fd); display: flex; align-items: center; justify-content: center; margin-top: 1px; }
    .space { flex: 1; }
    .cursor { position: absolute; left: 1179px; top: 708px; }
  `;
  render() {
    return html`
      <host-panel></host-panel>
      <div class="desk">
        <unity-launcher></unity-launcher>
        <div class="vm">
          <ie-chrome></ie-chrome>
          <div class="view"><tau-page></tau-page>
            <div class="scroll"><button aria-label="Вверх">${chevron(true)}</button>
              <div class="thumb">${draw(8, 9, svg`<path d="M0 .5h8M0 2.500h8M0 4.500h8M0 6.500h8" stroke="#8aa7cf"/>`)}</div>
              <div class="space"></div><button aria-label="Вниз">${chevron(false)}</button></div>
          </div>
          <vm-footer></vm-footer>
        </div>
      </div>
      <div class="cursor">${draw(13, 21, svg`<path d="M1 1v16l4-3.500L8 20l2.500-1L8 12.500h5z" fill="#fff" stroke="#000"/>`)}</div>`;
  }
}
